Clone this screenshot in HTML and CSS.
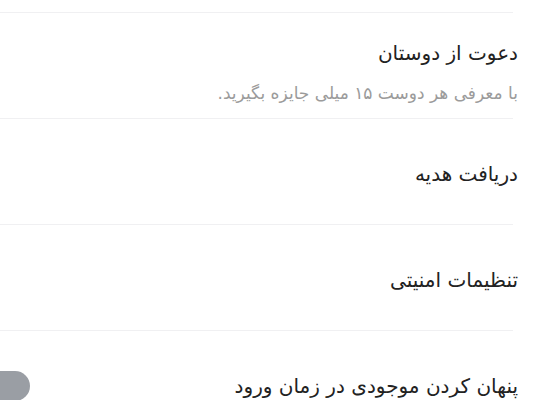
FILE: index.html
```html
<!DOCTYPE html>
<html lang="fa" dir="rtl">
<head>
<meta charset="utf-8">
<link rel="stylesheet" href="styles.css">
</head>
<body>
<div class="list">
  <div class="row row-sub">
    <div class="title">دعوت از دوستان</div>
    <div class="sub">با معرفی هر دوست ۱۵ میلی جایزه بگیرید.</div>
  </div>
  <div class="row">
    <div class="title">دریافت هدیه</div>
  </div>
  <div class="row">
    <div class="title">تنظیمات امنیتی</div>
  </div>
  <div class="row row-last">
    <div class="title">پنهان کردن موجودی در زمان ورود</div>
    <div class="toggle"></div>
  </div>
</div>
</body>
</html>
```
FILE: styles.css
```css
html, body {
  margin: 0;
  padding: 0;
  background: #ffffff;
  overflow: hidden;
}
body {
  width: 540px;
  height: 400px;
  font-family: "DejaVu Sans", sans-serif;
  direction: rtl;
}
.list {
  padding-top: 12px;
  padding-right: 27px;
  padding-left: 0;
  width: 513px;
}
.row {
  position: relative;
  height: 105px;
  border-top: 1px solid #f0f0f2;
  display: flex;
  flex-direction: column;
}
.row-last {
  height: 58px;
}
.row .title {
  margin-right: -5px;
  padding-top: 41px;
  font-size: 20px;
  line-height: 28px;
  color: #222222;
  white-space: nowrap;
}
.row-sub .title {
  padding-top: 26px;
}
.sub {
  margin-right: -5px;
  padding-top: 14px;
  font-size: 17px;
  line-height: 24px;
  color: #9b9b9b;
  white-space: nowrap;
}
.toggle {
  position: absolute;
  left: -20px;
  top: 40px;
  width: 50px;
  height: 30px;
  border-radius: 15px;
  background: #9a9ea4;
}
```
